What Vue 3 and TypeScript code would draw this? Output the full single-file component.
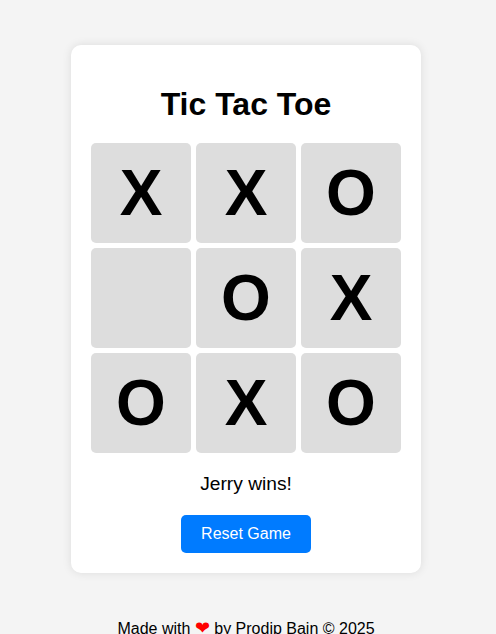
<script setup lang="ts">
import { ref, computed } from 'vue'

type Cell = 'X' | 'O' | ''

const initial: Cell[] = ['X', 'X', 'O', '', 'O', 'X', 'O', 'X', 'O']
const board = ref<Cell[]>([...initial])
const turn = ref<'X' | 'O'>('X')
const names: Record<'X' | 'O', string> = { X: 'Tom', O: 'Jerry' }
const lines = [
  [0, 1, 2], [3, 4, 5], [6, 7, 8],
  [0, 3, 6], [1, 4, 7], [2, 5, 8],
  [0, 4, 8], [2, 4, 6],
]

const winner = computed<Cell>(() => {
  for (const [a, b, c] of lines) {
    const v = board.value[a]
    if (v && v === board.value[b] && v === board.value[c]) return v
  }
  return ''
})

const status = computed(() => {
  if (winner.value) return `${names[winner.value]} wins!`
  if (board.value.every((c) => c)) return "It's a draw!"
  return `${names[turn.value]}'s turn`
})

function play(i: number) {
  if (board.value[i] || winner.value) return
  board.value[i] = turn.value
  turn.value = turn.value === 'X' ? 'O' : 'X'
}

function reset() {
  board.value = Array<Cell>(9).fill('')
  turn.value = 'X'
}
</script>

<template>
  <div class="page">
    <main class="card">
      <h1>Tic Tac Toe</h1>
      <div class="board">
        <div v-for="(cell, i) in board" :key="i" class="cell" @click="play(i)">{{ cell }}</div>
      </div>
      <p class="status">{{ status }}</p>
      <button class="reset" type="button" @click="reset">Reset Game</button>
    </main>
    <footer>Made with <span class="heart">❤</span> by Prodip Bain © 2025</footer>
  </div>
</template>

<style>
body {
  margin: 0;
  background: #f4f4f4;
  overflow: hidden;
}
</style>

<style scoped>
.page {
  height: 634px;
  box-sizing: border-box;
  padding: 45px 4px 0 0;
  display: flex;
  flex-direction: column;
  align-items: center;
  overflow: hidden;
  font-family: "Liberation Sans", Arial, sans-serif;
  font-size: 16px;
  color: #000;
}
.card {
  flex: none;
  box-sizing: border-box;
  width: 350px;
  height: 528px;
  padding: 20px;
  text-align: center;
  background: #fff;
  border-radius: 10px;
  box-shadow: 0 0 10px rgba(0, 0, 0, 0.1);
}
h1 {
  margin: 21px 0 20px;
  font-size: 32px;
  line-height: 37px;
}
.board {
  display: grid;
  grid-template-columns: repeat(3, 100px);
  grid-template-rows: repeat(3, 100px);
  gap: 5px;
}
.cell {
  display: flex;
  align-items: center;
  justify-content: center;
  background: #ddd;
  border-radius: 5px;
  font-size: 64px;
  font-weight: bold;
  cursor: pointer;
}
.status {
  margin: 20px 0;
  font-size: 19.2px;
  line-height: 22px;
}
.reset {
  display: block;
  margin: 0 auto;
  padding: 10px 20px;
  border: none;
  border-radius: 5px;
  background: #007bff;
  color: #fff;
  font-family: inherit;
  font-size: 16px;
  line-height: 18px;
  cursor: pointer;
}
footer {
  flex: none;
  margin-top: 47px;
  line-height: 18px;
  white-space: nowrap;
}
.heart {
  color: red;
  font-size: 18px;
  line-height: 1px;
}
</style>
